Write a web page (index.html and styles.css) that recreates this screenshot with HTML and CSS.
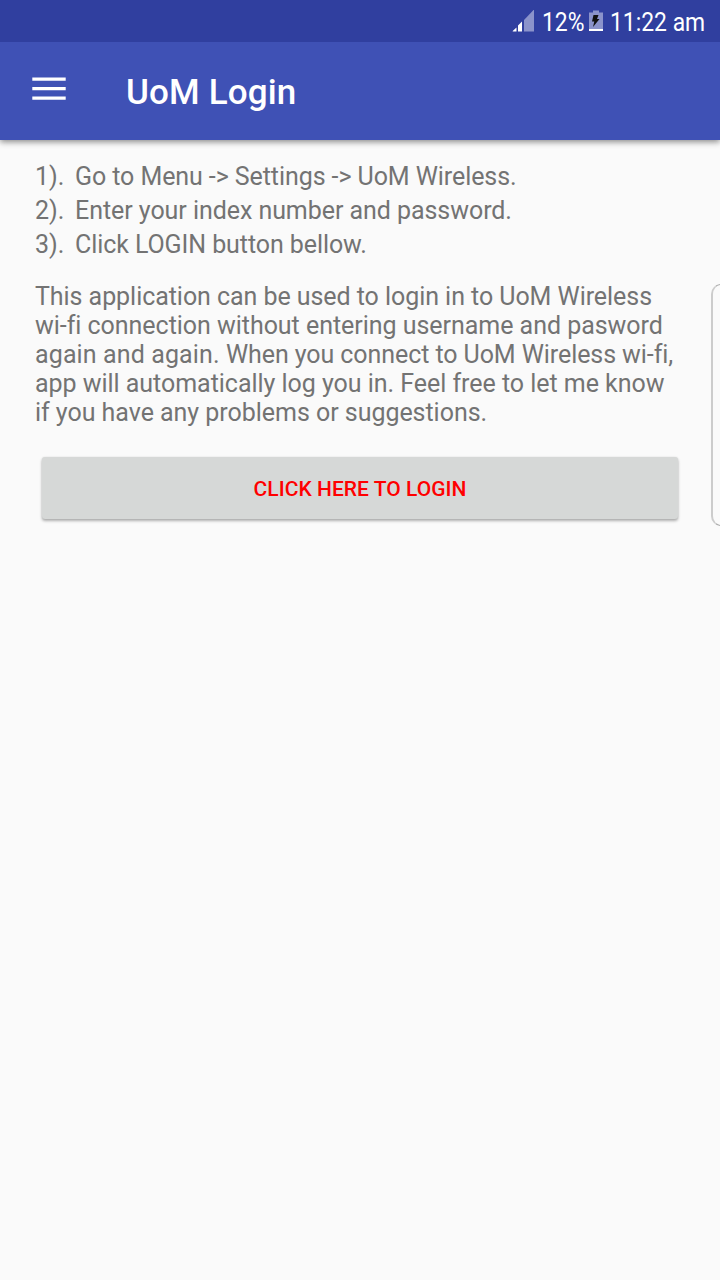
FILE: index.html
```html
<!DOCTYPE html>
<html lang="en">
<head>
<meta charset="utf-8">
<title>UoM Login</title>
<link rel="stylesheet" href="styles.css">
</head>
<body>
<div class="status-bar">
  <svg class="signal" width="22" height="22" viewBox="0 0 22 22"><path d="M12 21.5V10L22 -0.5V21.5Z" fill="#8b93cb"/><path d="M0.7 21.5V21L4.5 17.5V21.5ZM6 21.5V15.5L10 11.5V21.5Z" fill="#fff"/></svg>
  <span class="percent">12%</span>
  <svg class="battery" width="14" height="22" viewBox="0 0 14 22"><path d="M4 0.5H10V2.5H14V21H0V2.5H4Z" fill="#8b93cb"/><path d="M0 19H14V21H0Z" fill="#fff"/><path d="M4.5 5H9.5L8 9H10.5L4 17L5.3 11.5H3Z" fill="#111"/></svg>
  <span class="time">11:22 am</span>
</div>
<header class="app-bar">
  <svg class="menu" width="34" height="24" viewBox="0 0 34 24"><path d="M0.3 2.2H33.7M0.3 11.7H33.7M0.3 21.2H33.7" stroke="#fff" stroke-width="3.2"/></svg>
  <h1 class="title">UoM Login</h1>
</header>
<main class="content">
  <ol class="steps">
    <li class="step"><span class="number">1).</span><span class="tight">Go to Menu -&gt; Settings -&gt; UoM Wireless.</span></li>
    <li class="step"><span class="number">2).</span><span class="snug">Enter your index number and password.</span></li>
    <li class="step"><span class="number">3).</span><span class="tight">Click LOGIN button bellow.</span></li>
  </ol>
  <p class="description"><span class="snug">This application can be used to login in to UoM Wireless</span><br><span class="close">wi-fi connection without entering username and pasword</span><br><span class="loose">again and again. </span><span class="tight">When you connect to UoM Wireless wi-fi,</span><br><span class="close">app will automatically log you in. Feel free to let me know</span><br><span class="close">if you have any problems or suggestions.</span></p>
  <button class="login">CLICK HERE TO LOGIN</button>
</main>
<div class="edge-handle"></div>
</body>
</html>
```
FILE: styles.css
```css
* { box-sizing: border-box; }
body { margin: 0; width: 720px; height: 1280px; overflow: hidden; background: #fafafa; font-family: Roboto, sans-serif; color: #737373; position: relative; }
.status-bar { position: relative; z-index: 1; height: 42px; background: #303f9f; color: #fff; display: flex; align-items: center; justify-content: flex-end; padding: 2px 15px 0 0; font-size: 26px; }
.signal, .battery { margin-top: -3px; }
.percent, .time { transform: scaleX(.88); transform-origin: left; white-space: nowrap; }
.percent { width: 41px; margin-left: 8px; }
.battery { margin-left: 6px; margin-right: 7px; }
.time { width: 95px; }
.app-bar { height: 98px; background: #3f51b5; display: flex; align-items: center; padding-left: 32px; box-shadow: 0 2px 6px rgba(0,0,0,.45); }
.menu { margin-top: -4px; }
.title { margin: 2px 0 0 60px; color: #fff; font-size: 35px; font-weight: 500; letter-spacing: .15px; }
.content { padding: 20px 35px; }
.steps { list-style: none; margin: 0; padding: 0; }
.step { display: flex; height: 34px; line-height: 34px; font-size: 25px; }
.number { width: 40px; }
.tight { letter-spacing: -.08px; }
.snug { letter-spacing: -.055px; }
.close { letter-spacing: -.035px; }
.loose { letter-spacing: .12px; }
.description { margin: 20px 0 0; font-size: 25px; line-height: 29px; white-space: nowrap; }
.login { display: block; width: 636px; height: 62px; margin: 30px 0 0 7px; padding: 2px 0 0; border: 0; border-radius: 3px; background: #d6d8d7; box-shadow: 0 2px 3px rgba(0,0,0,.3), 0 0 2px rgba(0,0,0,.1); color: #f00; font: 500 21px Roboto, sans-serif; letter-spacing: .03px; }
.edge-handle { position: absolute; left: 711px; top: 284px; width: 20px; height: 242px; border: 1px solid #aaa; border-left: 2px solid #ccc; border-radius: 10px; background: #fafafa; }
```
